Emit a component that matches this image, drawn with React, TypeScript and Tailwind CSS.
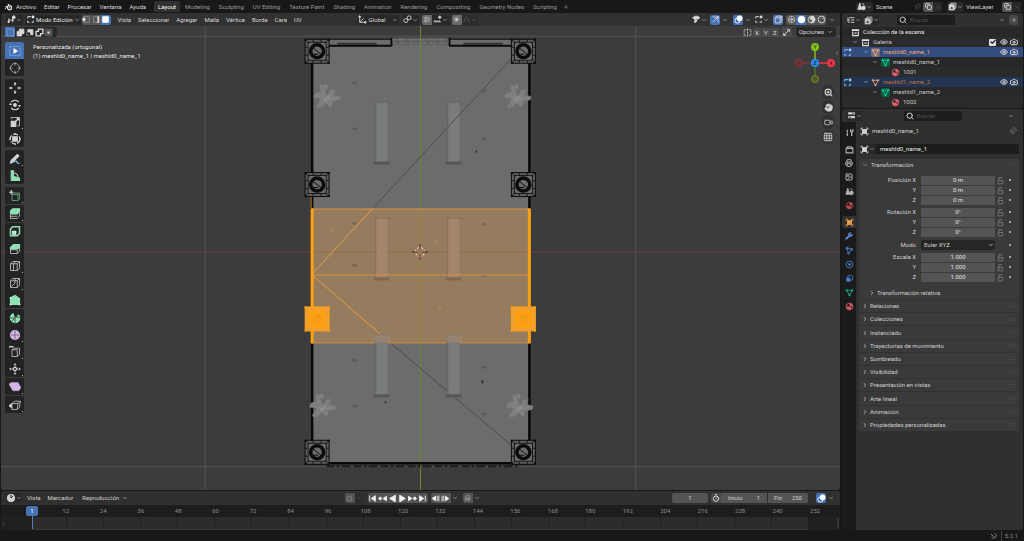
import type { ReactNode } from "react"
import {
  Camera,
  Check,
  ChevronDown,
  ChevronLeft,
  ChevronRight,
  Copy,
  Eye,
  Grid3x3,
  Hand,
  Image,
  ListTree,
  Magnet,
  Pin,
  Plus,
  Printer,
  Search,
  Timer,
  Video,
  Wrench,
  X,
  ZoomIn,
} from "lucide-react"

const menus = ["Archivo", "Editar", "Procesar", "Ventana", "Ayuda"]
const workspaces = [
  "Layout",
  "Modeling",
  "Sculpting",
  "UV Editing",
  "Texture Paint",
  "Shading",
  "Animation",
  "Rendering",
  "Compositing",
  "Geometry Nodes",
  "Scripting",
]
const viewMenus = ["Vista", "Seleccionar", "Agregar", "Malla", "Vértice", "Borde", "Cara", "UV"]
const panels = [
  "Relaciones",
  "Colecciones",
  "Instanciado",
  "Trayectorias de movimiento",
  "Sombreado",
  "Visibilidad",
  "Presentación en vistas",
  "Arte lineal",
  "Animación",
  "Propiedades personalizadas",
]
const frames = [12, 24, 36, 48, 60, 72, 84, 96, 108, 120, 132, 144, 156, 168, 180, 192, 204, 216, 228, 240, 252]

function Svg({ children, className = "size-[9px]" }: { children: ReactNode; className?: string }) {
  return (
    <svg viewBox="0 0 16 16" fill="none" stroke="currentColor" strokeWidth="1.6" className={`shrink-0 ${className}`}>
      {children}
    </svg>
  )
}

function Down({ className = "text-[#a0a0a0]" }: { className?: string }) {
  return <ChevronDown className={`size-[6px] shrink-0 ${className}`} strokeWidth={3} />
}

function IconButton({ label, children, className = "w-[9px]" }: { label: string; children: ReactNode; className?: string }) {
  return (
    <button aria-label={label} className={`flex h-[10px] shrink-0 items-center justify-center ${className}`}>
      {children}
    </button>
  )
}

/* ---------- small glyphs ---------- */

const BlenderLogo = () => (
  <Svg className="h-[8px] w-[9px]">
    <circle cx="10" cy="9.5" r="4.2" strokeWidth="2.6" />
    <circle cx="10" cy="9.5" r="1.4" fill="currentColor" stroke="none" />
    <path d="M0.5 12 L9 4.5 M2 6.8 H8 M6.5 1.8 L12 6" strokeWidth="2" />
  </Svg>
)

const EditIcon = ({ className }: { className?: string }) => (
  <Svg className={className}>
    <path d="M3 6V3h3M3 10v3h3M10 13h3v-3M5 3h4" />
    <circle cx="12.5" cy="3.5" r="2.6" fill="currentColor" stroke="none" />
  </Svg>
)

const ObjectIcon = ({ className }: { className?: string }) => (
  <Svg className={className}>
    <rect x="4.5" y="4.5" width="7" height="7" fill="currentColor" />
    <path d="M2 5V2h3M11 2h3v3M14 11v3h-3M5 14H2v-3" />
  </Svg>
)

const MeshIcon = ({ className }: { className?: string }) => (
  <Svg className={className}>
    <path d="M3 4h10L8 13z" />
    <circle cx="3" cy="4" r="1.8" fill="currentColor" stroke="none" />
    <circle cx="13" cy="4" r="1.8" fill="currentColor" stroke="none" />
    <circle cx="8" cy="13" r="1.8" fill="currentColor" stroke="none" />
  </Svg>
)

const MaterialIcon = ({ className }: { className?: string }) => (
  <Svg className={className}>
    <circle cx="8" cy="8" r="5.8" />
    <path d="M8 2.2v5.8h5.8A5.8 5.8 0 0 0 8 2.2zM8 8L4 12a5.8 5.8 0 0 1-1.8-4z" fill="currentColor" stroke="none" />
    <path d="M3 9h7l2 3-4 2-4-1z" fill="currentColor" stroke="none" />
  </Svg>
)

const SceneIcon = () => (
  <Svg>
    <path d="M5 2L1.500 13h7z" fill="currentColor" />
    <circle cx="11.500" cy="10.500" r="3.200" fill="currentColor" />
    <path d="M10 2l3 4" />
  </Svg>
)

const LayersIcon = () => (
  <Svg>
    <path d="M5 5V2h9v9h-3" />
    <rect x="2" y="5" width="9" height="9" fill="currentColor" />
    <path d="M4 12l3-4 2 4z" fill="#282828" stroke="none" />
  </Svg>
)

const CollectionIcon = () => (
  <Svg className="size-[9px] text-[#e4e4e4]">
    <path d="M1.500 2h13v3.500h-13z" fill="currentColor" stroke="none" />
    <path d="M3 6v7.500h10V6M6 9h4" strokeWidth="2" />
  </Svg>
)

const OverlayIcon = () => (
  <Svg>
    <circle cx="6" cy="10" r="4.500" />
    <circle cx="10" cy="6" r="4.500" fill="currentColor" />
  </Svg>
)

const CubeIcon = ({ className }: { className?: string }) => (
  <Svg className={className}>
    <path d="M2 5l3-3h9v9l-3 3H2zM2 5h9v9M11 5l3-3" />
  </Svg>
)

/* ---------- top bar ---------- */

function TopBar() {
  return (
    <header className="flex h-[13px] shrink-0 items-center bg-[#181818] pl-1 pr-[3px]">
      <button aria-label="Blender" className="mr-[3px] text-[#d8d8d8]">
        <BlenderLogo />
      </button>
      <nav className="flex gap-2 text-[#d8d8d8]">
        {menus.map((item) => (
          <button key={item}>{item}</button>
        ))}
      </nav>
      <div role="tablist" className="ml-2 flex items-center gap-px text-[#989898]">
        {workspaces.map((name) => (
          <button
            key={name}
            role="tab"
            aria-selected={name === "Layout"}
            className="h-[11px] rounded-t-[2px] px-1 aria-selected:bg-[#303030] aria-selected:text-white"
          >
            {name}
          </button>
        ))}
        <IconButton label="Agregar espacio">
          <Plus className="size-[6px]" />
        </IconButton>
      </div>
      <div className="ml-auto flex items-center text-[#d8d8d8]">
        <button aria-label="Escena" className="flex h-[10px] items-center rounded-[2px] bg-[#282828] px-px">
          <SceneIcon />
          <Down />
        </button>
        <input aria-label="Nombre de escena" defaultValue="Scene" className="ml-[3px] w-[38px] bg-transparent" />
        <Pin className="size-[7px] rotate-45 text-[#606060]" />
        <IconButton label="Nueva escena" className="ml-[2px] w-[10px] rounded-l-[2px] bg-[#545454]">
          <Copy className="size-[7px]" strokeWidth={3} />
        </IconButton>
        <IconButton label="Quitar escena" className="w-[9px] bg-[#282828] text-[#505050]">
          <X className="size-[6px]" />
        </IconButton>
        <button aria-label="Capa" className="ml-[5px] flex h-[10px] items-center rounded-[2px] bg-[#282828] px-px">
          <LayersIcon />
          <Down />
        </button>
        <input aria-label="Nombre de capa" defaultValue="ViewLayer" className="ml-[2px] w-[36px] bg-transparent" />
        <IconButton label="Nueva capa" className="w-[10px] rounded-l-[2px] bg-[#545454]">
          <Copy className="size-[7px]" strokeWidth={3} />
        </IconButton>
        <IconButton label="Quitar capa" className="w-[9px] bg-[#282828] text-[#505050]">
          <X className="size-[6px]" />
        </IconButton>
      </div>
    </header>
  )
}

/* ---------- 3D viewport ---------- */

function Pillar({ x, y, selected = false }: { x: number; y: number; selected?: boolean }) {
  const c = selected ? "#ffa012" : "#0c0c0c"
  return (
    <g transform={`translate(${x} ${y})`} stroke={c} fill="none">
      <rect x="-12" y="-12" width="24" height="24" fill={selected ? "#e9a040" : "#5c5d5d"} strokeWidth="1" />
      <rect x="-9" y="-9" width="18" height="18" fill={selected ? "#f9a01c" : "#6b6d6d"} strokeWidth="0.800" />
      <path
        d="M-12-12L-8-8M12-12L8-8M-12 12L-8 8M12 12L8 8M-4-12v3M4-12v3M-4 12v-3M4 12v-3M-12-4h3M-12 4h3M12-4h-3M12 4h-3"
        strokeWidth="0.800"
      />
      <circle r="6.500" strokeWidth="3.600" fill={selected ? "#f2981a" : "#6b6d6d"} />
      <path d="M-5-4L5 4M-4 3h5" strokeWidth="1" />
      <path d="M-12.500-12.500h2v2h-2zM10.500-12.500h2v2h-2zM-12.500 10.500h2v2h-2zM10.500 10.500h2v2h-2z" fill={c} stroke="none" />
    </g>
  )
}

function Plant({ x, y }: { x: number; y: number }) {
  return (
    <g transform={`translate(${x} ${y})`} fill="#7f8080" stroke="#737474" strokeWidth="0.5">
      <path d="M0-2L-3-12-7-13-6-6-12-4-13 0-6 1-9 7-5 10-1 5 4 10 6 4 13 2 14-1 7-3 9-8 4-8 2-4z" />
      <circle cx="-1" cy="-11" r="2.500" />
      <circle cx="-8" cy="8" r="2" />
      <path d="M-2 0L-6-4-3 3-1 6 2 2 7 3 3-1 5-5z" fill="#8b8c8c" />
    </g>
  )
}

function Pedestal({ x, y, warm = false }: { x: number; y: number; warm?: boolean }) {
  return (
    <g fill={warm ? "#a2856c" : "#797b7d"}>
      <rect x={x - 1} y={y} width="15" height="2" fill={warm ? "#8c7058" : "#646565"} />
      <rect x={x + 1} y={y + 1} width="11" height="60" />
      <path d={`M${x} ${y + 1}v59`} stroke={warm ? "#8c7058" : "#666767"} />
      <rect x={x - 2} y={y + 60} width="16" height="3" fill={warm ? "#806850" : "#555656"} />
    </g>
  )
}

function Scene() {
  const dots = [
    [355, 83], [355, 129], [485, 91], [485, 139], [355, 361], [355, 407], [485, 368], [485, 415],
  ]
  const warmDots = [[355, 224], [485, 225], [355, 266], [485, 276]]
  return (
    <svg
      role="img"
      aria-label="Vista ortogonal de la galería"
      viewBox="1 13 840 478"
      preserveAspectRatio="xMidYMid slice"
      className="absolute inset-0 size-full"
    >
      <path d="M1 36.500H841M1 467.500H841M205.500 13V491M636.500 13V491" stroke="#545454" />
      <path d="M1 252.500H841" stroke="#703e42" />
      <rect x="312" y="39" width="218" height="426" fill="#6b6d6d" />
      <path d="M312 39.500h80v7M530 39.500h-80v7" stroke="#0a0a0a" fill="none" />
      <path d="M312 46h80M450 46h80" stroke="#0a0a0a" strokeWidth="2" />
      <path d="M392 38v8M450 38v8" stroke="#0a0a0a" strokeWidth="2" />
      <path d="M338 44h39M464 44h39" stroke="#303030" strokeWidth="2" />
      <rect x="393" y="38" width="56" height="7" fill="#5a5b5b" />
      <path d="M393 40h56M394 43.500h55" stroke="#7c7d7d" strokeWidth="1.500" strokeDasharray="2 1 1 2 3 1" />
      <path d="M421 13V491" stroke="#6f8430" />
      <Pedestal x={376} y={102} />
      <Pedestal x={448} y={102} />
      <path d="M512 59L373 209M389 342L512 446" stroke="#4a4b4b" />
      {dots.map(([x, y]) => (
        <ellipse key={`${x}-${y}`} cx={x} cy={y} rx="2.500" ry="1.500" fill="#5a5b5b" />
      ))}
      <path d="M477 151v2M483 381v3M386 402v2" stroke="#262626" strokeWidth="1.500" />
      <path d="M312.500 46V209M530 46V209M312.500 342V465M530 342V465" stroke="#080808" strokeWidth="2.500" />
      <rect x="312" y="209" width="218" height="134" fill="#967c5f" />
      <path d="M421 209V343" stroke="#95883c" />
      <path d="M312 252.500h218" stroke="#9a6950" />
      <Pedestal x={376} y={218} warm />
      <Pedestal x={448} y={218} warm />
      {warmDots.map(([x, y]) => (
        <ellipse key={`${x}-${y}`} cx={x} cy={y} rx="2.500" ry="1.500" fill="#80684f" />
      ))}
      <path d="M373 209L312 275L389 342" stroke="#eb9d43" fill="none" />
      <path d="M312 209.500H530M312 275.500H530M312 343.500H530" stroke="#dc923c" />
      <Pedestal x={376} y={335} />
      <Pedestal x={448} y={335} />
      <rect x="375" y="335" width="16" height="8" fill="#a48670" opacity="0.7" />
      <rect x="447" y="335" width="16" height="8" fill="#a48670" opacity="0.7" />
      <path d="M312.500 209V344M530 209V344" stroke="#ffa012" strokeWidth="3" />
      <path d="M311.500 197V209" stroke="#b87820" />
      <path d="M312 464H530" stroke="#080808" strokeWidth="2.500" />
      <path d="M327 467H518" stroke="#1c1c1c" strokeWidth="2" strokeDasharray="8 2 3 2 9 3" />
      <Plant x={327} y={98} />
      <Plant x={518} y={98} />
      <Plant x={323} y={408} />
      <Plant x={520} y={408} />
      <Pillar x={317.5} y={51.5} />
      <Pillar x={524} y={51.5} />
      <Pillar x={317.5} y={185} />
      <Pillar x={524} y={185} />
      <Pillar x={317.5} y={319.5} selected />
      <Pillar x={524} y={319.5} selected />
      <Pillar x={317.5} y={453} />
      <Pillar x={524} y={453} />
      <g transform="translate(420.500 252.500)" fill="none">
        <circle r="4.500" stroke="#ffffff" />
        <circle r="4.500" stroke="#c4352b" strokeDasharray="2 2" />
        <path d="M-8 0h5M3 0h5M0-8v5M0 3v5" stroke="#3c3024" />
      </g>
      <path d="M332 231h1M436 242h1M440 309h1" stroke="#ffc068" strokeWidth="1" />
    </svg>
  )
}

function ViewportHeader() {
  return (
    <div className="relative grid h-[13px] grid-cols-[1fr_auto_1fr] items-center bg-[#303030]/90 pl-[5px] pr-1 text-[#d8d8d8]">
      <div className="flex items-center">
        <button aria-label="Tipo de editor" className="flex h-[10px] items-center rounded-[2px] bg-[#282828] px-px">
          <Svg>
            <path d="M3 12V6M3 9h10M10 5v8" />
            <circle cx="12" cy="4" r="2.500" fill="currentColor" />
            <circle cx="3" cy="12" r="1.500" fill="currentColor" />
          </Svg>
          <Down />
        </button>
        <button className="ml-[2px] flex h-[10px] items-center gap-px rounded-[2px] bg-[#282828] px-px text-[#e8e8e8]">
          <EditIcon className="size-[9px]" />
          Modo Edición
          <Down />
        </button>
        <div className="ml-px flex overflow-hidden rounded-[2px]">
          <IconButton label="Vértices" className="w-[10px] bg-[#545454]">
            <Svg><path d="M3 3h10v10H3z" stroke="#8a8a8a" /><circle cx="3.500" cy="8" r="2.500" fill="currentColor" /></Svg>
          </IconButton>
          <IconButton label="Bordes" className="w-[9px] bg-[#545454]">
            <Svg><path d="M3 3h10v10H3z" stroke="#8a8a8a" /><path d="M11 2v12" strokeWidth="3" /></Svg>
          </IconButton>
          <IconButton label="Caras" className="w-[10px] bg-[#4772b3] text-white">
            <Svg><path d="M3 3h10v10H3z" fill="currentColor" /></Svg>
          </IconButton>
        </div>
        <nav className="ml-[7px] flex gap-[7px]">
          {viewMenus.map((item) => (
            <button key={item}>{item}</button>
          ))}
        </nav>
      </div>
      <div className="flex items-center">
        <button className="flex h-[10px] items-center gap-[2px] rounded-[2px] bg-[#282828] px-px">
          <Svg>
            <path d="M3 2v11h11M3 13l7-7" />
            <circle cx="3" cy="3" r="1.500" fill="currentColor" />
            <circle cx="13" cy="13" r="1.500" fill="currentColor" />
          </Svg>
          <span className="w-[21px] text-left">Global</span>
          <Down />
        </button>
        <IconButton label="Pivote" className="ml-1 w-[16px] rounded-[2px] bg-[#282828]">
          <Svg><circle cx="5" cy="10" r="3.500" /><circle cx="11" cy="5" r="3.500" /></Svg>
          <Down />
        </IconButton>
        <IconButton label="Adherir" className="ml-[3px] w-[10px] rounded-l-[2px] bg-[#686868] text-[#a8a8a8]">
          <Magnet className="size-[7px] rotate-45" strokeWidth={3} />
        </IconButton>
        <IconButton label="Adherir a" className="w-[17px] bg-[#282828]">
          <Svg><path d="M1 12h13M3 9v3M7 9v3M11 9v3" /><circle cx="12" cy="4" r="2" fill="currentColor" /></Svg>
          <Down />
        </IconButton>
        <IconButton label="Edición proporcional" className="ml-[3px] w-[10px] rounded-l-[2px] bg-[#686868]">
          <Svg><circle cx="8" cy="8" r="5" stroke="#929292" /><circle cx="8" cy="8" r="2" fill="currentColor" /></Svg>
        </IconButton>
        <IconButton label="Decaimiento" className="mr-[8px] w-[16px] bg-[#2c2c2c] text-[#585858]">
          <Svg><path d="M2 13c4 0 3-10 6-10s2 10 6 10" /></Svg>
          <Down className="text-[#585858]" />
        </IconButton>
      </div>
      <div className="flex items-center justify-end">
        <IconButton label="Selección" className="w-[17px]">
          <Svg><path d="M1 5c4-4 10-4 13 0-3 3-9 4-13 0z" fill="currentColor" /><path d="M5 8v6l4-4z" fill="currentColor" /></Svg>
          <Down />
        </IconButton>
        <IconButton label="Controles" className="ml-[2px] w-[10px] rounded-[2px] bg-[#4772b3]">
          <Svg><path d="M3 3c6 0 10 4 10 10M3 13L13 3M9 3h4v4" /></Svg>
        </IconButton>
        <IconButton label="Opciones de controles"><Down /></IconButton>
        <IconButton label="Superposiciones" className="ml-1 w-[10px] rounded-[2px] bg-[#4772b3] text-white"><OverlayIcon /></IconButton>
        <IconButton label="Opciones de superposiciones"><Down /></IconButton>
        <IconButton label="Superposición de edición" className="w-[18px]"><EditIcon /><Down /></IconButton>
        <IconButton label="Rayos X" className="ml-[3px] w-[10px] rounded-[2px] bg-[#4772b3]"><CubeIcon /></IconButton>
        <div className="ml-[3px] mr-px flex overflow-hidden rounded-[2px] bg-[#545454]">
          <IconButton label="Estructura" className="w-[10px]"><Svg><circle cx="8" cy="8" r="6" strokeWidth="1" /><path d="M2 8h12M8 2v12M4 4c3 3 3 5 0 8M12 4c-3 3-3 5 0 8" strokeWidth="1" /></Svg></IconButton>
          <IconButton label="Sólido" className="w-[10px] bg-[#4772b3] text-white"><Svg><circle cx="8" cy="8" r="6" fill="currentColor" /></Svg></IconButton>
          <IconButton label="Material" className="w-[10px]"><Svg><circle cx="8" cy="8" r="6" /><path d="M8 2a6 6 0 0 1 0 12l2-5-5-2z" fill="currentColor" /></Svg></IconButton>
          <IconButton label="Procesado" className="w-[10px]"><Svg><circle cx="8" cy="8" r="6" /><path d="M10 5l2 2" /></Svg></IconButton>
        </div>
        <IconButton label="Opciones de sombreado"><Down /></IconButton>
      </div>
    </div>
  )
}

function ToolSettings() {
  return (
    <div className="relative flex h-[12px] items-center justify-between pr-1 text-[#d8d8d8]">
      <div className="ml-1 flex items-center rounded-[2px] bg-[#282828] pr-1">
        <IconButton label="Nueva selección" className="w-[10px] rounded-[1px] bg-[#4772b3] text-[#a8c4f0]">
          <Svg><path d="M2 2h12v12H2z" strokeDasharray="1 1" /></Svg>
        </IconButton>
        <IconButton label="Extender" className="w-[10px]"><Svg><path d="M6 2h8v8h-4v4H2V6h4z" fill="currentColor" /></Svg></IconButton>
        <IconButton label="Sustraer" className="w-[9px]"><Svg><path d="M5 3h9v9h-4V7H5z" fill="currentColor" /><path d="M3 8v5h5" strokeDasharray="1 1" /></Svg></IconButton>
        <IconButton label="Invertir" className="w-[10px]"><Svg><path d="M6 2h8v8h-4v4H2V6h4z" strokeWidth="2.500" /></Svg></IconButton>
        <IconButton label="Intersecar" className="w-[9px]"><Svg><path d="M2 2h12v12H2z" fill="#505050" stroke="#606060" /><path d="M6 6h4v4H6z" fill="currentColor" stroke="none" /></Svg></IconButton>
      </div>
      <div className="flex items-center gap-px">
        <IconButton label="Simetría"><Svg><path d="M6 3H2v10h4M10 3h4v10h-4M8 1v14" strokeDasharray="2 1" /></Svg></IconButton>
        <button className="h-[9px] w-[8px] rounded-l-[2px] bg-[#4c4c4c] leading-[9px]">X</button>
        <button className="h-[9px] w-[8px] bg-[#4c4c4c] leading-[9px]">Y</button>
        <button className="h-[9px] w-[8px] rounded-r-[2px] bg-[#4c4c4c] leading-[9px]">Z</button>
        <IconButton label="Fusión automática" className="ml-[2px] w-[10px] rounded-[2px] bg-[#4c4c4c]">
          <Svg><path d="M3 13L13 3M9 3h4v4M3 9v4h4" /></Svg>
        </IconButton>
        <button className="ml-[3px] flex h-[10px] items-center gap-[3px] rounded-[2px] bg-[#282828] px-[3px]">
          Opciones
          <Down />
        </button>
      </div>
    </div>
  )
}

const G = "#8fe0b4"
const P = "#d3b7e8"

const toolGroups: { name: string; icon: ReactNode; more?: boolean }[][] = [
  [
    { name: "Seleccionar marco", icon: <><path d="M1 2h14v12H1z" strokeDasharray="1 1" stroke="#8fb4f0" /><path d="M6 4l6 4-6 4z" fill="#fff" stroke="none" /></> },
    { name: "Cursor", icon: <><circle cx="8" cy="8" r="6" strokeDasharray="3 1" strokeWidth="1.200" /><path d="M8 0v5M8 11v5M0 8h5M11 8h5" stroke="#b8a0a0" strokeWidth="1" /></> },
  ],
  [
    { name: "Mover", icon: <><path d="M8 1v4M8 11v4M1 8h4M11 8h4" strokeWidth="1.500" /><path d="M8 0l2 3H6zM8 16l2-3H6zM0 8l3-2v4zM16 8l-3-2v4z" fill="currentColor" stroke="none" /></> },
    { name: "Rotar", icon: <><path d="M3 4a6.500 6.500 0 0 1 10 0M3 12a6.500 6.500 0 0 0 10 0" /><circle cx="8" cy="8" r="1.800" fill="currentColor" /><path d="M0 8l2-3 2 3zM12 8l2 3 2-3z" fill="currentColor" stroke="none" /></> },
    { name: "Escalar", more: true, icon: <><path d="M3 7h6v7H3z" fill="currentColor" /><path d="M3 4V2h11v11h-3" strokeWidth="1" /><path d="M8 8l5-5M10 3h3v3" /></> },
    { name: "Transformar", icon: <><circle cx="8" cy="8" r="6.500" strokeDasharray="7 2" /><path d="M5 5h6v6H5z" fill="currentColor" /><path d="M8 0v2M8 14v2M0 8h2M14 8h2" /></> },
  ],
  [
    { name: "Anotar", more: true, icon: <><path d="M3 10L11 2l2 2-8 8-3 1z" fill="currentColor" stroke="currentColor" /><path d="M2 14c4-2 7-4 8-3s0 3 4 3" stroke="#9cc0d8" /></> },
    { name: "Medir", icon: <><path d="M3 1h3v8h2l6 2v3H3z" fill={G} stroke={G} /><path d="M7 4a6 6 0 0 1 5 6" stroke="#c8c8c8" /></> },
  ],
  [{ name: "Agregar cubo", more: true, icon: <><path d="M4 6l2-2h8v8l-2 2H4zM4 6h8v8M12 6l2-2" stroke="#60a080" strokeWidth="1.200" /><path d="M3 0v6M0 3h6" /></> }],
  [{ name: "Extruir", more: true, icon: <><path d="M2 4l3-3h9v4l-3 3H2z" fill={G} stroke={G} /><path d="M2 9v5h9l3-3V7M2 11h9" strokeWidth="1" /></> }],
  [
    { name: "Insertar caras", icon: <><path d="M2 4l3-3h9v9l-3 3H2z" stroke={G} strokeWidth="2" /><path d="M5 7h4v4H5z" fill={G} stroke="#e0fff0" /></> },
    { name: "Biselar", icon: <><path d="M2 6l4-4h8v4l-3 2H2z" fill={G} stroke={G} /><path d="M2 7v7h9l3-3V6M2 9h9v5" strokeWidth="1" /></> },
    { name: "Cortar bucle", more: true, icon: <path d="M2 5l3-3h9v9l-3 3H2zM2 5h9v9M11 5l3-3M6 14V5l3-3" strokeWidth="1" /> },
    { name: "Cuchillo", more: true, icon: <path d="M2 5l3-3h9v9l-3 3H2zM2 5h9v9M11 5l3-3M3 13l5-5V2" strokeWidth="1" /> },
    { name: "Polígonos", icon: <><path d="M2 5l6-3 6 4v8H2z" fill={G} stroke={G} /><path d="M1 13h2v2H1zM13 13h2v2h-2zM1 4h2v2H1z" fill="#e0fff0" stroke="none" /></> },
  ],
  [
    { name: "Girar", icon: <><path d="M8 8L13 3A7 7 0 1 1 6 1.300z" fill={G} stroke="none" /><path d="M8 8H1M8 8v7M8 8l-5 5M10 2v5h5" stroke="#303030" strokeWidth="1" /></> },
    { name: "Suavizar", more: true, icon: <><circle cx="8" cy="8" r="6" fill={P} stroke={P} /><path d="M2 8h12M8 2v12" stroke="#65566e" strokeWidth="1" /></> },
    { name: "Deslizar borde", more: true, icon: <><path d="M4 5l3-2h7v8l-3 3H4zM4 5h7v9" strokeWidth="1" /><path d="M0 1h6" stroke="#ccc" strokeWidth="2" /></> },
    { name: "Contraer", more: true, icon: <><path d="M8 5l3 3-3 3-3-3z" /><path d="M8 0l2 3H6zM8 16l2-3H6zM0 8l3-2v4zM16 8l-3-2v4z" fill="currentColor" stroke="none" /></> },
  ],
  [{ name: "Inclinar", more: true, icon: <path d="M0 4l3-2h9l4 7-3 4H5z" fill={P} stroke={P} strokeWidth="0.500" /> }],
  [{ name: "Desgarrar", more: true, icon: <><path d="M4 6l3-3h8l-1 8-3 3H4zM4 6h8l-1 8M12 6l3-3" strokeWidth="1" /><path d="M0 9l3-2v4z" fill="currentColor" /></> }],
]

function Toolbar() {
  return (
    <div role="toolbar" className="flex w-[19px] flex-col gap-px">
      {toolGroups.map((group, i) => (
        <div key={group[0].name} className={`flex flex-col overflow-hidden rounded-[2px] bg-[#232323] ${i < 3 ? "mb-[2px]" : ""}`}>
          {group.map((tool) => (
            <button
              key={tool.name}
              aria-label={tool.name}
              aria-pressed={tool.name === "Seleccionar marco"}
              className="relative flex h-[17px] items-center justify-center text-[#d4d4d4] aria-pressed:bg-[#4772b3]"
            >
              <Svg className="size-[12px]">{tool.icon}</Svg>
              {tool.more && <span className="absolute bottom-px right-px size-px bg-[#b0b0b0]" />}
            </button>
          ))}
        </div>
      ))}
    </div>
  )
}

function Gizmo() {
  return (
    <svg viewBox="0 0 40 40" className="size-[40px]" aria-label="Ejes">
      <path d="M20 20V4" stroke="#8bb92b" strokeWidth="1.500" />
      <path d="M20 20H35" stroke="#e8374f" strokeWidth="1.500" />
      <path d="M20 20V36" stroke="#55702c" strokeWidth="1.500" />
      <path d="M20 20H5" stroke="#7c343e" strokeWidth="1.500" />
      <circle cx="4" cy="20" r="3.500" fill="#5c3439" stroke="#a0303f" />
      <circle cx="20" cy="36" r="3.500" fill="#4d5c2a" stroke="#6d8c24" />
      <circle cx="20" cy="4" r="4" fill="#84c21c" />
      <circle cx="36" cy="20" r="4" fill="#f2384f" />
      <circle cx="20" cy="20" r="4" fill="#2c8cf0" />
      <text x="20" y="6" textAnchor="middle" fontSize="6" fill="#1c2c08">Y</text>
      <text x="36" y="22" textAnchor="middle" fontSize="6" fill="#3c0810">X</text>
      <text x="20" y="22" textAnchor="middle" fontSize="6" fill="#08203c">Z</text>
    </svg>
  )
}

function Viewport() {
  return (
    <section className="relative flex flex-1 flex-col overflow-hidden rounded-[3px] bg-[#3c3c3c]">
      <Scene />
      <ViewportHeader />
      <ToolSettings />
      <div className="relative flex flex-1 items-start pl-1 pt-1">
        <Toolbar />
        <div className="pl-[9px] leading-[9px] text-white [text-shadow:0_0_1px_#000]">
          <p>Personalizada (ortogonal)</p>
          <p>(1) meshId0_name_1 | meshId0_name_1</p>
        </div>
        <div className="ml-auto flex flex-col items-end pr-[5px] pt-px">
          <Gizmo />
          <div className="mt-[2px] flex flex-col gap-px pr-px text-[#d0d0d0]">
            <IconButton label="Acercar" className="h-[14px] w-[12px] rounded-full bg-[#303030]"><ZoomIn className="size-[9px]" strokeWidth={3} /></IconButton>
            <IconButton label="Desplazar" className="h-[14px] w-[12px] rounded-full bg-[#303030]"><Hand className="size-[9px]" fill="currentColor" /></IconButton>
            <IconButton label="Cámara" className="h-[14px] w-[12px] rounded-full bg-[#303030]"><Video className="size-[9px]" /></IconButton>
            <IconButton label="Perspectiva" className="h-[14px] w-[12px] rounded-full bg-[#303030]"><Grid3x3 className="size-[10px]" /></IconButton>
          </div>
        </div>
        <button aria-label="Mostrar panel" className="absolute right-0 top-3 text-[#b0b0b0]">
          <ChevronLeft className="size-[6px]" />
        </button>
      </div>
    </section>
  )
}

/* ---------- timeline ---------- */

const transport = [
  ["Primer fotograma", "M3 3v10M13 3L6 8l7 5z"],
  ["Clave anterior", "M1 8l3-3 3 3-3 3zM15 4L9 8l6 4z"],
  ["Reproducir atrás", "M13 2L3 8l10 6z"],
  ["Reproducir", "M3 2l10 6-10 6z"],
  ["Clave siguiente", "M15 8l-3-3-3 3 3 3zM1 4l6 4-6 4z"],
  ["Último fotograma", "M13 3v10M3 3l7 5-7 5z"],
]

function Timeline() {
  return (
    <section className="mt-px flex h-[39px] shrink-0 flex-col overflow-hidden rounded-[3px] bg-[#222222]">
      <div className="grid h-[14px] grid-cols-[1fr_auto_1fr] items-center bg-[#303030] pl-[5px] pr-1 text-[#d0d0d0]">
        <div className="flex items-center">
          <button aria-label="Tipo de editor" className="flex h-[10px] items-center rounded-[2px] bg-[#282828]">
            <Svg className="size-[10px]"><circle cx="8" cy="8" r="6" fill="currentColor" /><path d="M8 3v5l3-3" stroke="#282828" /></Svg>
            <Down />
          </button>
          <nav className="ml-[5px] flex gap-[7px]">
            <button>Vista</button>
            <button>Marcador</button>
            <button className="ml-[2px] flex items-center gap-[3px]">
              Reproducción
              <Down />
            </button>
          </nav>
        </div>
        <div className="flex items-center pr-4">
          <IconButton label="Inserción automática" className="w-[10px] rounded-l-[2px] bg-[#545454] text-[#888888]"><Svg><circle cx="8" cy="8" r="4" /></Svg></IconButton>
          <IconButton label="Opciones de inserción" className="w-[9px] bg-[#2c2c2c]"><Down className="text-[#484848]" /></IconButton>
          <div className="ml-1 flex rounded-[2px] bg-[#545454] text-[#f0f0f0]">
            {transport.map(([label, d]) => (
              <IconButton key={label} label={label} className="w-[10px]">
                <Svg><path d={d} fill="currentColor" /></Svg>
              </IconButton>
            ))}
          </div>
          <div className="ml-[3px] flex rounded-l-[2px] bg-[#545454] text-[#f0f0f0]">
            <IconButton label="Retroceder" className="w-[10px]"><Svg><path d="M8 4L2 8l6 4zM11 3v10M14 3v10" fill="currentColor" /></Svg></IconButton>
            <IconButton label="Avanzar" className="w-[10px]"><Svg><path d="M8 4l6 4-6 4zM5 3v10M2 3v10" fill="currentColor" /></Svg></IconButton>
          </div>
          <IconButton label="Opciones de salto"><Down /></IconButton>
          <IconButton label="Adherir tiempo" className="ml-[3px] w-[10px] rounded-l-[2px] bg-[#545454] text-[#909090]"><Magnet className="size-[7px] -rotate-45" strokeWidth={3} /></IconButton>
          <IconButton label="Opciones de adherencia"><Down /></IconButton>
        </div>
        <div className="flex items-center justify-end">
          <input aria-label="Fotograma actual" defaultValue="1" className="h-[10px] w-[36px] rounded-[2px] bg-[#545454] text-center" />
          <IconButton label="Rango de previsualización" className="ml-[3px] w-[10px] rounded-l-[2px] bg-[#484848]"><Timer className="size-[8px]" strokeWidth={3} /></IconButton>
          <label className="flex h-[10px] w-[46px] items-center justify-between bg-[#545454] pl-[7px] pr-[7px]">
            Inicio
            <input defaultValue="1" className="w-[12px] bg-transparent text-right" />
          </label>
          <label className="ml-px flex h-[10px] w-[40px] items-center justify-between rounded-r-[2px] bg-[#545454] pl-[6px] pr-[6px]">
            Fin
            <input defaultValue="250" className="w-[16px] bg-transparent text-right" />
          </label>
          <IconButton label="Superposiciones" className="ml-2 w-[10px] rounded-[2px] bg-[#4772b3] text-white"><OverlayIcon /></IconButton>
          <IconButton label="Opciones de línea" className="w-[10px]"><Down /></IconButton>
        </div>
      </div>
      <div className="relative flex flex-1 flex-col">
        <div className="flex h-[12px] items-center bg-[#1d1d1d] pl-[46px] pr-[6px] text-[#8c8c8c]">
          {frames.map((f) => (
            <span key={f} className="flex-1 text-center">{f}</span>
          ))}
        </div>
        <div className="flex flex-1 bg-[#202020] pl-[31px] pr-[32px]">
          <div className="flex flex-1 border-b border-[#383838] bg-[#2c2c2c] pl-[34px]">
            {frames.slice(0, -1).map((f) => (
              <span key={f} className="flex-1 border-l border-[#212121]" />
            ))}
          </div>
        </div>
        <span className="absolute left-[31px] top-2 h-4 w-px bg-[#5680c2]" />
        <span className="absolute left-[25px] top-px flex h-[10px] w-[12px] items-center justify-center rounded-[2px] bg-[#4772b3] text-white">1</span>
        <ChevronRight className="absolute bottom-1 left-0 size-[5px] text-[#909090]" />
        <span className="absolute bottom-px right-px h-[11px] w-[2px] bg-[#343434]" />
      </div>
    </section>
  )
}

/* ---------- outliner ---------- */

const outliner = [
  { object: "meshId0_name_1", data: "meshId0_name_1", material: "1001", row: "bg-[#334d80]", active: true },
  { object: "meshId1_name_2", data: "meshId1_name_2", material: "1002", row: "bg-[#22344f]", active: false },
]

function Visibility() {
  return (
    <span className="ml-auto flex gap-px pr-[5px] text-[#d8d8d8]">
      <IconButton label="Ocultar"><Eye className="size-[8px]" strokeWidth={3} /></IconButton>
      <IconButton label="Desactivar en procesamiento"><Camera className="size-[8px]" strokeWidth={3} /></IconButton>
    </span>
  )
}

function Outliner() {
  return (
    <section className="h-[95px] shrink-0 overflow-hidden rounded-[3px] bg-[#282828] text-[#c8c8c8]">
      <div className="flex h-[14px] items-center bg-[#303030] pl-[5px] pr-[5px]">
        <IconButton label="Tipo de editor" className="w-[14px] rounded-[2px] bg-[#282828]"><ListTree className="size-[8px]" strokeWidth={3} /><Down /></IconButton>
        <IconButton label="Modo de muestra" className="ml-[3px] w-[15px] rounded-[2px] bg-[#282828]"><LayersIcon /><Down /></IconButton>
        <label className="ml-[18px] flex h-[10px] w-[58px] items-center gap-[3px] rounded-[2px] bg-[#1d1d1d] px-[2px]">
          <Search className="size-[8px] shrink-0" strokeWidth={3} />
          <input aria-label="Buscar en la escena" placeholder="Buscar" className="w-full bg-transparent placeholder:text-[#505050]" />
        </label>
        <IconButton label="Filtro" className="ml-auto w-[9px]"><Down /></IconButton>
        <IconButton label="Nueva colección" className="ml-[3px] w-[9px] rounded-[2px] bg-[#484848]"><Plus className="size-[6px]" /></IconButton>
      </div>
      <div className="flex h-[10px] items-center gap-[3px] pl-[9px] text-[#e4e4e4]">
        <CollectionIcon />
        Colección de la escena
      </div>
      <div className="flex h-[10px] items-center gap-[2px] bg-[#2b2b2b] pl-[10px]">
        <Down className="mr-px text-[#a0a0a0]" />
        <CollectionIcon />
        <span className="pl-px">Galeria</span>
        <label className="ml-auto mr-px flex size-[7px] items-center justify-center rounded-[1px] bg-[#e0e0e0]">
          <input type="checkbox" defaultChecked aria-label="Incluir Galeria" className="sr-only" />
          <Check className="size-[6px] text-[#202020]" strokeWidth={5} />
        </label>
        <div><Visibility /></div>
      </div>
      {outliner.map((item) => (
        <div key={item.object}>
          <div className={`flex h-[10px] items-center pl-px ${item.row}`}>
            <EditIcon className="size-[9px] text-[#9cc8f0]" />
            <Down className="ml-[11px] mr-[2px] text-[#a0b0c8]" />
            <span className={`flex rounded-[2px] text-[#f0a070] ${item.active ? "bg-[#707080]" : ""}`}><MeshIcon className="size-[9px]" /></span>
            <span className={`pl-[3px] ${item.active ? "text-[#f0a870]" : "text-[#c07040]"}`}>{item.object}</span>
            <Visibility />
          </div>
          <div className="flex h-[10px] items-center pl-[30px]">
            <Down className="mr-[3px] text-[#a0a0a0]" />
            <span className="flex rounded-[2px] bg-[#145a42] text-[#00d4a0]"><MeshIcon className="size-[9px]" /></span>
            <span className="pl-[3px]">{item.data}</span>
          </div>
          <div className="flex h-[10px] items-center bg-[#2b2b2b] pl-[49px]">
            <MaterialIcon className="size-[9px] text-[#e06070]" />
            <span className="pl-[3px]">{item.material}</span>
          </div>
        </div>
      ))}
    </section>
  )
}

/* ---------- properties ---------- */

const tabs: { name: string; icon: ReactNode; color: string }[] = [
  { name: "Herramienta", icon: <Svg><path d="M4 3v4M4 8v6M10 2v4l2 2 2-2V2M12 8v6" strokeWidth="2" /></Svg>, color: "mb-[3px] text-[#c8c8c8]" },
  { name: "Procesamiento", icon: <Svg><path d="M2 6h12v8H2zM4 6V3h7l3 3" strokeWidth="2" /></Svg>, color: "text-[#b0b0b0]" },
  { name: "Salida", icon: <Printer className="size-[8px]" strokeWidth={3} />, color: "text-[#b0b0b0]" },
  { name: "Capa de vista", icon: <Image className="size-[8px]" strokeWidth={3} />, color: "text-[#b0b0b0]" },
  { name: "Escena", icon: <SceneIcon />, color: "text-[#b0b0b0]" },
  { name: "Mundo", icon: <MaterialIcon />, color: "mb-[3px] text-[#b84850]" },
  { name: "Objeto", icon: <ObjectIcon />, color: "text-[#ee9a48]" },
  { name: "Modificadores", icon: <Wrench className="size-[8px]" fill="currentColor" />, color: "text-[#5c8cd8]" },
  { name: "Partículas", icon: <Svg><path d="M4 4l8 2-6 7z" /><circle cx="4" cy="4" r="2" fill="currentColor" /><circle cx="12" cy="6" r="1.500" fill="currentColor" /><circle cx="6" cy="13" r="1.500" fill="currentColor" /></Svg>, color: "text-[#4d78c0]" },
  { name: "Físicas", icon: <Svg><circle cx="8" cy="8" r="6" /><circle cx="8" cy="8" r="1.800" fill="currentColor" /></Svg>, color: "text-[#4d78c0]" },
  { name: "Restricciones", icon: <Svg><circle cx="9" cy="7" r="5" /><circle cx="6" cy="10" r="3.500" fill="currentColor" /></Svg>, color: "text-[#4d78c0]" },
  { name: "Datos", icon: <MeshIcon />, color: "text-[#10b088]" },
  { name: "Material", icon: <MaterialIcon />, color: "text-[#d85868]" },
]

function Lock() {
  return (
    <Svg className="size-[9px] text-[#787878]">
      <path d="M4 8h8v6H4zM5 8V3h5v2" />
    </Svg>
  )
}

function Vector({ title, value }: { title: string; value: string }) {
  return (
    <div className="flex flex-col">
      {["X", "Y", "Z"].map((axis) => (
        <div key={axis} className="flex h-[10px] items-center">
          <label htmlFor={`${title}-${axis}`} className="w-[62px] pr-[5px] text-right">
            {axis === "X" ? `${title} X` : axis}
          </label>
          <input
            id={`${title}-${axis}`}
            defaultValue={value}
            className="h-[9px] min-w-0 flex-1 bg-[#545454] text-center text-[#e0e0e0]"
          />
          <IconButton label={`Bloquear ${title} ${axis}`} className="w-[10px]"><Lock /></IconButton>
          <span className="ml-1 mr-[8px] size-[2px] rounded-full bg-[#c8c8c8]" />
        </div>
      ))}
    </div>
  )
}

function Grip() {
  return <span className="ml-auto mr-1 h-[3px] w-[6px] border-y border-dotted border-[#4c4c4c]" />
}

function Properties() {
  return (
    <section className="mt-px flex flex-1 flex-col overflow-hidden rounded-[3px] bg-[#303030] text-[#d0d0d0]">
      <div className="flex h-[13px] items-center pl-[5px] pr-[5px]">
        <IconButton label="Tipo de editor" className="w-[15px] rounded-[2px] bg-[#282828]">
          <Svg><path d="M2 4h12M2 11h12" strokeWidth="4" /><path d="M9 4h3M3 11h4" stroke="#282828" /></Svg>
          <Down />
        </IconButton>
        <label className="mx-auto flex h-[10px] w-[58px] items-center gap-[3px] rounded-[2px] bg-[#1d1d1d] px-[2px]">
          <Search className="size-[8px] shrink-0" strokeWidth={3} />
          <input aria-label="Buscar propiedades" placeholder="Buscar" className="w-full bg-transparent placeholder:text-[#505050]" />
        </label>
        <IconButton label="Opciones" className="w-[15px]"><Down /></IconButton>
      </div>
      <div className="flex flex-1">
        <div role="tablist" className="flex w-[14px] shrink-0 flex-col gap-[2px] bg-[#1b1b1b] pt-1">
          {tabs.map((tab) => (
            <button
              key={tab.name}
              role="tab"
              aria-label={tab.name}
              aria-selected={tab.name === "Objeto"}
              className={`flex h-[12px] items-center justify-center rounded-l-[2px] aria-selected:bg-[#303030] ${tab.color}`}
            >
              {tab.icon}
            </button>
          ))}
        </div>
        <div className="flex min-w-0 flex-1 flex-col pl-[3px] pr-[4px]">
          <div className="flex h-[18px] items-center gap-[3px] pl-px">
            <ObjectIcon className="size-[9px]" />
            meshId0_name_1
            <Pin className="ml-auto mr-[2px] size-[8px] rotate-45 text-[#888888]" />
          </div>
          <div className="mt-1 flex h-[10px] items-center pl-px">
            <button aria-label="Objeto" className="flex h-[10px] w-[16px] items-center rounded-l-[2px] bg-[#282828]">
              <ObjectIcon className="size-[9px]" />
              <Down />
            </button>
            <input
              aria-label="Nombre del objeto"
              defaultValue="meshId0_name_1"
              className="h-[10px] min-w-0 flex-1 rounded-r-[2px] bg-[#1d1d1d] pl-[4px] text-[#e8e8e8]"
            />
          </div>
          <div className="mt-[5px] rounded-t-[2px] bg-[#3a3a3a]">
            <button aria-expanded="true" className="flex h-[11px] w-full items-center gap-[3px] pl-[3px]">
              <Down />
              Transformación
              <Grip />
            </button>
            <div className="mt-[5px] flex flex-col gap-[2px]">
              <Vector title="Posición" value="0 m" />
              <Vector title="Rotación" value="0°" />
              <div className="flex h-[11px] items-center">
                <label htmlFor="modo" className="w-[62px] pr-[5px] text-right">Modo</label>
                <div className="relative flex-1">
                  <select id="modo" className="block h-[10px] w-full appearance-none rounded-[2px] bg-[#262626] pl-[3px]">
                    <option>Euler XYZ</option>
                  </select>
                  <ChevronDown className="absolute right-px top-[2px] size-[6px]" strokeWidth={3} />
                </div>
                <span className="ml-[14px] mr-[8px] size-[2px] rounded-full bg-[#c8c8c8]" />
              </div>
              <Vector title="Escala" value="1.000" />
            </div>
            <button aria-expanded="false" className="mt-1 flex h-[13px] w-full items-center gap-[2px] pl-[10px]">
              <ChevronRight className="size-[6px]" strokeWidth={3} />
              Transformación relativa
            </button>
          </div>
          <div className="flex h-[132px] flex-col">
            {panels.map((name) => (
              <button
                key={name}
                aria-expanded="false"
                className="flex w-full flex-1 items-center gap-[2px] border-t border-[#313131] bg-[#3a3a3a] pl-[3px]"
              >
                <ChevronRight className="size-[6px]" strokeWidth={3} />
                {name}
                <Grip />
              </button>
            ))}
          </div>
        </div>
      </div>
    </section>
  )
}

export default function App() {
  return (
    <div className="flex h-screen flex-col overflow-hidden bg-[#181818] font-['Roboto','Liberation_Sans',sans-serif] text-[6px] leading-[10px]">
      <TopBar />
      <main className="flex min-h-0 flex-1 gap-[2px] px-px">
        <div className="flex min-w-0 flex-1 flex-col">
          <Viewport />
          <Timeline />
        </div>
        <aside className="flex w-[181px] shrink-0 flex-col">
          <Outliner />
          <Properties />
        </aside>
      </main>
      <footer className="flex h-[11px] shrink-0 items-center justify-end gap-[3px] pr-[6px] text-[#888888]">
        <Svg className="size-[8px]"><path d="M2 4l9 9M3 10l4 4M9 3l4 4-3 4" strokeWidth="2" /></Svg>
        <span className="border-l border-[#444444] pl-[3px]">5.2.1</span>
      </footer>
    </div>
  )
}
